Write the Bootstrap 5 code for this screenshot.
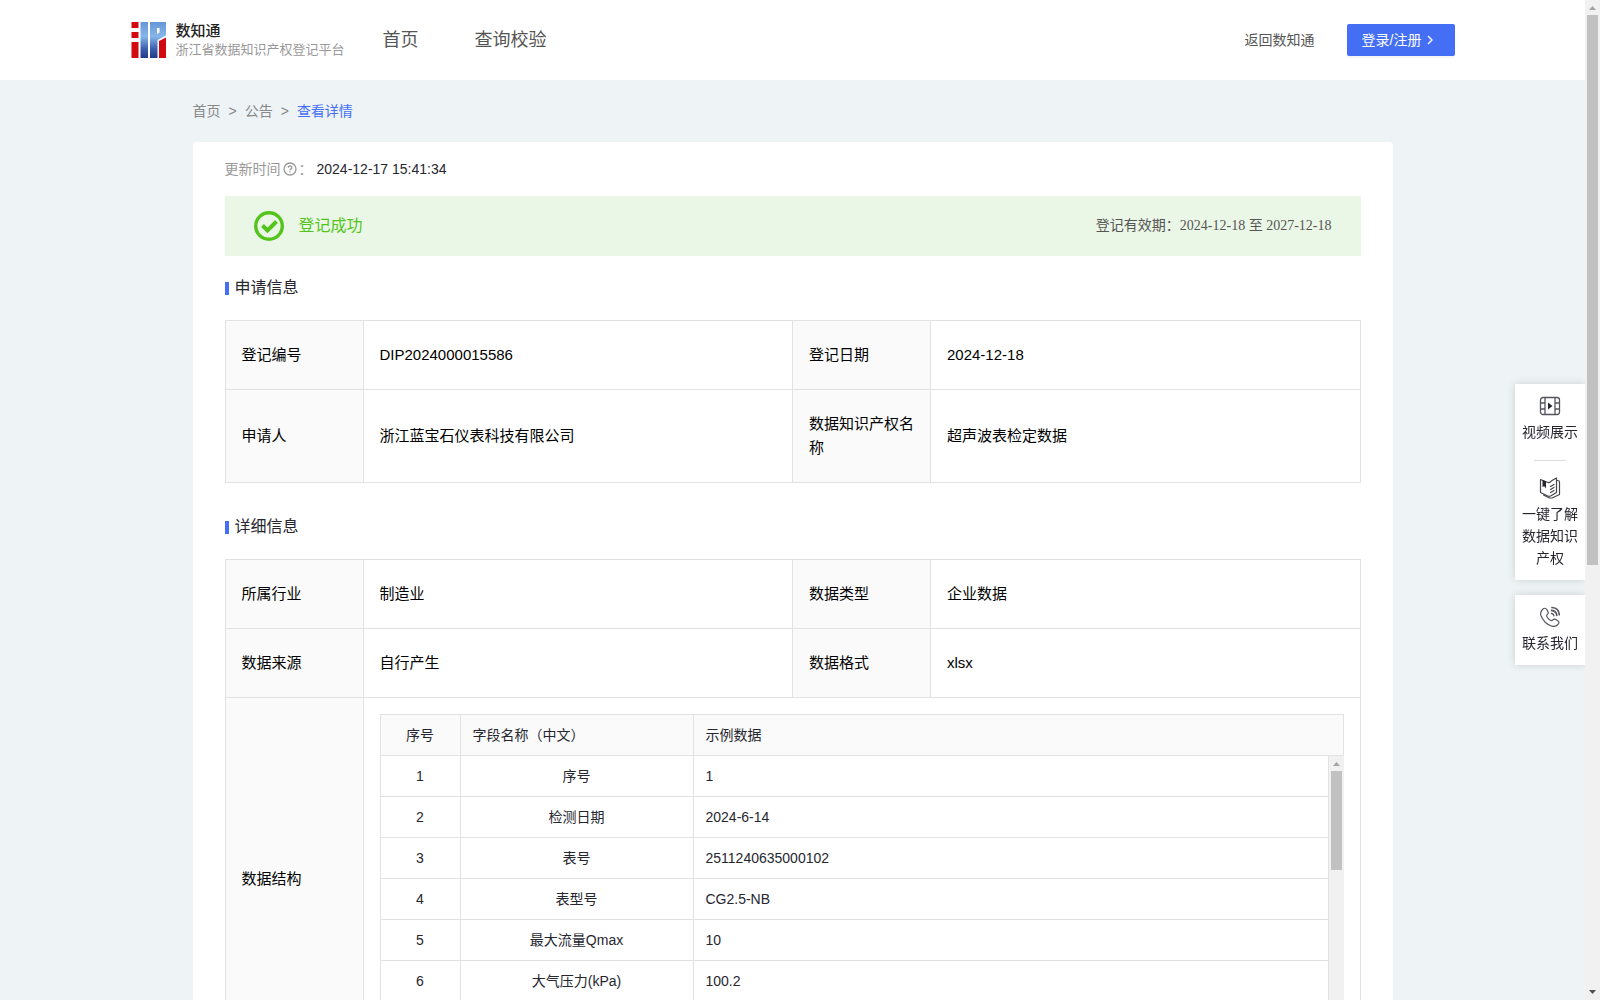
<!DOCTYPE html>
<html lang="zh-CN">
<head>
<meta charset="utf-8">
<meta name="viewport" content="width=device-width, initial-scale=1">
<title>数知通 - 查看详情</title>
<link rel="stylesheet" href="https://cdn.jsdelivr.net/npm/bootstrap@5.3.0/dist/css/bootstrap.min.css">
<style>
  :root { --brand: #446ff4; --line: #e2e2e2; --ink: #26262f; }
  body { font-family: "Liberation Sans", "Noto Sans CJK SC", sans-serif; font-size: 14px; line-height: 22px; color: var(--ink); background: #eef3f6; }
  a { text-decoration: none; color: inherit; }
  .page-view { overflow-y: auto; scrollbar-width: none; min-width: 0; }
  .page-view::-webkit-scrollbar { display: none; }
  .top-bar { height: 80px; }
  .top-inner { max-width: 1324px; }
  .brand-link { gap: 9px; }
  .site-name { font-size: 15px; font-weight: 500; line-height: 20px; color: #222; }
  .site-sub { font-size: 13px; line-height: 18px; color: #999; }
  .logo-text { width: 165px; white-space: nowrap; }
  .main-nav { gap: 56px; font-size: 18px; line-height: 26px; color: #555; margin-left: 42px; }
  .back-link { color: #555; margin-right: 32px; }
  .login-btn { width: 108px; height: 32px; background: var(--brand); color: #fff; font-size: 14px; line-height: 22px; border: 0; border-radius: 2px; box-shadow: 0 2px 0 rgba(0,0,0,.04); padding: 0 15px; }
  .login-btn:hover { background: #5c83f8; color: #fff; }
  .page-wrap { max-width: 1200px; }
  .crumbs { height: 62px; gap: 8px; color: #888; }
  .crumbs .here { color: var(--brand); }
  .detail-panel { border-radius: 4px; padding: 16px 32px 32px; }
  .update-row { color: #999; margin-bottom: 16px; gap: 2px; }
  .update-time { color: var(--ink); margin-left: 2px; }
  .status-bar { height: 60px; background: #ebf7e6; padding: 0 29px; }
  .status-ok { color: #52c41a; font-size: 16px; gap: 15px; }
  .valid-range { font-family: "Liberation Serif", "Noto Sans CJK SC", serif; color: #555; }
  .block-title { height: 64px; font-size: 16px; line-height: 24px; font-weight: 400; margin: 0; gap: 6px; }
  .block-title::before { content: ""; width: 4px; height: 13px; background: var(--brand); }
  .block-gap { margin-top: 12px; }
  .info-table { width: 100%; table-layout: fixed; border-collapse: collapse; font-size: 15px; line-height: 24px; color: #000; }
  .info-table .label-col { width: 138px; }
  .info-table > tbody > tr > * { border: 1px solid var(--line); padding: 22px 16px; font-weight: 400; vertical-align: middle; text-align: left; }
  .info-table > tbody > tr > th { background: #fafafa; }
  .info-table > tbody > tr > .nest-cell { padding: 16px; }
  .field-box { border: 1px solid var(--line); border-width: 1px 0 0 1px; color: var(--ink); font-size: 14px; line-height: 22px; }
  .field-table { width: 100%; table-layout: fixed; border-collapse: separate; border-spacing: 0; }
  .field-table th, .field-table td { height: 41px; padding: 0 12px; border: 1px solid var(--line); border-width: 0 1px 1px 0; font-weight: 400; }
  .field-table th { background: #fafafa; }
  .col-no { width: 80px; }
  .col-name { width: 233px; }
  .field-body { height: 287px; overflow: hidden; }
  .scroll-rail { width: 15px; flex: none; background: #f1f1f1; }
  .scroll-rail svg { display: block; flex: none; }
  .scroll-thumb { width: 11px; background: #c1c1c1; flex: none; }
  .thumb-inner { height: 99px; }
  .thumb-page { height: 55vh; }
  .side-dock { position: fixed; right: 15px; top: 384px; width: 70px; gap: 15px; z-index: 10; }
  .dock-box { background: #fff; box-shadow: 0 0 8px rgba(0,0,0,.15); padding: 11px 7px; text-align: center; clip-path: inset(-10px 0 -10px -10px); }
  .dock-item { display: flex; flex-direction: column; align-items: center; gap: 4px; }
  .dock-sep { width: 32px; height: 1px; background: #ddd; margin: 17px auto 16px; }
</style>
<script src="https://cdn.jsdelivr.net/npm/bootstrap@5.3.0/dist/js/bootstrap.bundle.min.js"></script>
</head>
<body>
<div class="d-flex vh-100">
  <div class="page-view flex-grow-1">
    <header class="top-bar bg-white">
      <div class="top-inner mx-auto h-100 d-flex align-items-center">
        <a href="#" class="brand-link d-flex align-items-center">
          <svg width="36" height="36" viewBox="0 0 36 36" aria-hidden="true">
            <defs><linearGradient id="lg" x1="0" y1="0" x2="0" y2="1"><stop offset="0" stop-color="#6596d6"/><stop offset=".4" stop-color="#86b6ea"/><stop offset=".75" stop-color="#3a5eae"/><stop offset="1" stop-color="#223a86"/></linearGradient></defs>
            <path fill="#d20a0f" d="M.5 0h7v6h-7zM.5 10h7v6h-7zM.5 20h7v16h-7zM28 19l7-3.500V36h-7z"/>
            <path fill="url(#lg)" fill-rule="evenodd" d="M9.500 0h7.500v36H9.500zM19 0h16v13.500l-8.500 4.500v18H19zM26 6v6l2.500-1.500V6z"/>
          </svg>
          <span class="logo-text d-flex flex-column"><span class="site-name">数知通</span><span class="site-sub">浙江省数据知识产权登记平台</span></span>
        </a>
        <nav class="main-nav d-flex"><a href="#">首页</a><a href="#">查询校验</a></nav>
        <a href="#" class="back-link ms-auto">返回数知通</a>
        <button type="button" class="btn login-btn d-flex align-items-center gap-1">登录/注册
          <svg width="10" height="10" viewBox="0 0 10 10" fill="none" stroke="#fff" stroke-width="1.4" aria-hidden="true"><path d="M3 1l4 4-4 4"/></svg>
        </button>
      </div>
    </header>

    <main class="page-wrap mx-auto">
      <nav class="crumbs d-flex align-items-center" aria-label="breadcrumb">
        <a href="#">首页</a><span>&gt;</span><a href="#">公告</a><span>&gt;</span><a href="#" class="here">查看详情</a>
      </nav>

      <section class="detail-panel bg-white">
        <div class="update-row d-flex align-items-center">
          <span>更新时间</span>
          <svg width="14" height="14" viewBox="0 0 14 14" fill="none" stroke="#999" stroke-width="1.3" aria-hidden="true"><circle cx="7" cy="7" r="6"/><path d="M5.2 5.8c0-2.4 3.6-2.4 3.6-.1 0 1.2-1.8 1.2-1.8 2.5M7 9.3v1.2"/></svg>
          <span>：</span><span class="update-time">2024-12-17 15:41:34</span>
        </div>

        <div class="status-bar d-flex align-items-center justify-content-between">
          <div class="status-ok d-flex align-items-center">
            <svg width="30" height="30" viewBox="0 0 30 30" fill="none" stroke="#52c41a" aria-hidden="true"><circle cx="15" cy="15" r="13.3" stroke-width="3.400"/><path d="M8.500 14.500l5 5 9-9" stroke-width="4"/></svg>
            <span>登记成功</span>
          </div>
          <div class="valid-range">登记有效期：2024-12-18 至 2027-12-18</div>
        </div>

        <h2 class="block-title d-flex align-items-center">申请信息</h2>
        <table class="info-table">
          <colgroup><col class="label-col"><col><col class="label-col"><col></colgroup>
          <tbody>
            <tr><th scope="row">登记编号</th><td>DIP2024000015586</td><th scope="row">登记日期</th><td>2024-12-18</td></tr>
            <tr><th scope="row">申请人</th><td>浙江蓝宝石仪表科技有限公司</td><th scope="row">数据知识产权名称</th><td>超声波表检定数据</td></tr>
          </tbody>
        </table>

        <h2 class="block-title block-gap d-flex align-items-center">详细信息</h2>
        <table class="info-table">
          <colgroup><col class="label-col"><col><col class="label-col"><col></colgroup>
          <tbody>
            <tr><th scope="row">所属行业</th><td>制造业</td><th scope="row">数据类型</th><td>企业数据</td></tr>
            <tr><th scope="row">数据来源</th><td>自行产生</td><th scope="row">数据格式</th><td>xlsx</td></tr>
            <tr><th scope="row">数据结构</th>
              <td colspan="3" class="nest-cell">
                <div class="field-box">
                  <table class="field-table">
                    <colgroup><col class="col-no"><col class="col-name"><col></colgroup>
                    <thead><tr><th scope="col" class="text-center">序号</th><th scope="col">字段名称（中文）</th><th scope="col">示例数据</th></tr></thead>
                  </table>
                  <div class="field-body d-flex align-items-start">
                    <table class="field-table">
                      <colgroup><col class="col-no"><col class="col-name"><col></colgroup>
                      <tbody>
                        <tr><td class="text-center">1</td><td class="text-center">序号</td><td>1</td></tr>
                        <tr><td class="text-center">2</td><td class="text-center">检测日期</td><td>2024-6-14</td></tr>
                        <tr><td class="text-center">3</td><td class="text-center">表号</td><td>2511240635000102</td></tr>
                        <tr><td class="text-center">4</td><td class="text-center">表型号</td><td>CG2.5-NB</td></tr>
                        <tr><td class="text-center">5</td><td class="text-center">最大流量Qmax</td><td>10</td></tr>
                        <tr><td class="text-center">6</td><td class="text-center">大气压力(kPa)</td><td>100.2</td></tr>
                      </tbody>
                    </table>
                    <div class="scroll-rail h-100 d-flex flex-column align-items-center" aria-hidden="true">
                      <svg width="15" height="15" viewBox="0 0 15 15"><path fill="#a3a3a3" d="M4 10l3.500-4 3.500 4z"/></svg>
                      <div class="scroll-thumb thumb-inner"></div>
                    </div>
                  </div>
                </div>
              </td>
            </tr>
          </tbody>
        </table>
      </section>
    </main>
  </div>

  <div class="scroll-rail d-flex flex-column align-items-center" aria-hidden="true">
    <svg width="15" height="15" viewBox="0 0 15 15"><path fill="#a3a3a3" d="M4 10l3.500-4 3.500 4z"/></svg>
    <div class="scroll-thumb thumb-page"></div>
    <svg class="mt-auto" width="15" height="15" viewBox="0 0 15 15"><path fill="#505050" d="M4 5l3.500 4 3.500-4z"/></svg>
  </div>
</div>

<aside class="side-dock d-flex flex-column">
  <div class="dock-box">
    <a href="#" class="dock-item">
      <svg width="22" height="22" viewBox="0 0 22 22" fill="none" stroke="#55555f" stroke-width="1.300" aria-hidden="true"><rect x="1.500" y="2.500" width="19" height="17" rx="2.500"/><path d="M6 2.500v17M16 2.500v17M1.500 8H6M1.500 14H6M16 8h4.500M16 14h4.500"/><path d="M9 7.500v7l4.500-3.500z" fill="#26262f" stroke="none"/></svg>
      <span>视频展示</span>
    </a>
    <div class="dock-sep"></div>
    <a href="#" class="dock-item">
      <svg width="22" height="22" viewBox="0 0 22 22" fill="none" stroke="#45454f" stroke-width="1.200" stroke-linejoin="round" stroke-linecap="round" aria-hidden="true"><path d="M1.500 2.500L9 5.500c2 .5 2.500-1 4-2l4.500-2.500v14.500l-6 3.500c-1 .5-1.700.5-2.700 0L1.500 15.500z"/><path d="M18.500 3.500c1.500 0 2 .5 2 1.500v12.500l-7.500 3.500h-2.500l-6-3M11.500 9.500l3.500-2M11.500 12.500l3.500-2M11.500 15.500l3.500-2"/><path d="M3.500 3l3.500 1.500v7L5.200 9.300 3.500 10z" fill="#26262f" stroke="none"/></svg>
      <span>一键了解数据知识产权</span>
    </a>
  </div>
  <div class="dock-box">
    <a href="#" class="dock-item">
      <svg width="22" height="22" viewBox="0 0 22 22" fill="none" stroke="#55555f" stroke-width="1.200" stroke-linecap="round" stroke-linejoin="round" aria-hidden="true"><path d="M3.500 3.500C5 1.800 6.800 1.800 7.800 3.500l1.200 2.300c.6 1.200.2 2-.8 2.800-.8.700-.6 1.600 0 2.600.9 1.400 2 2.400 3.300 3.100 1 .5 1.700.4 2.300-.3.800-1 1.700-1.200 2.800-.6l2.200 1.300c1.500 1 1.500 2 .4 3.400-1.700 2.300-4 2.900-6.800 1.900C7 18.100 3.500 13.500 1.900 9.500 1.200 7 1.900 5 3.500 3.500z"/><path d="M13 1.500c4.200.3 7 3 7.300 7.200M12.500 4.300c3.200.3 5 2 5.300 5" stroke-width="1.700"/><path d="M12.300 7.300c1.700.2 2.500 1 2.700 2.600"/></svg>
      <span>联系我们</span>
    </a>
  </div>
</aside>
</body>
</html>
